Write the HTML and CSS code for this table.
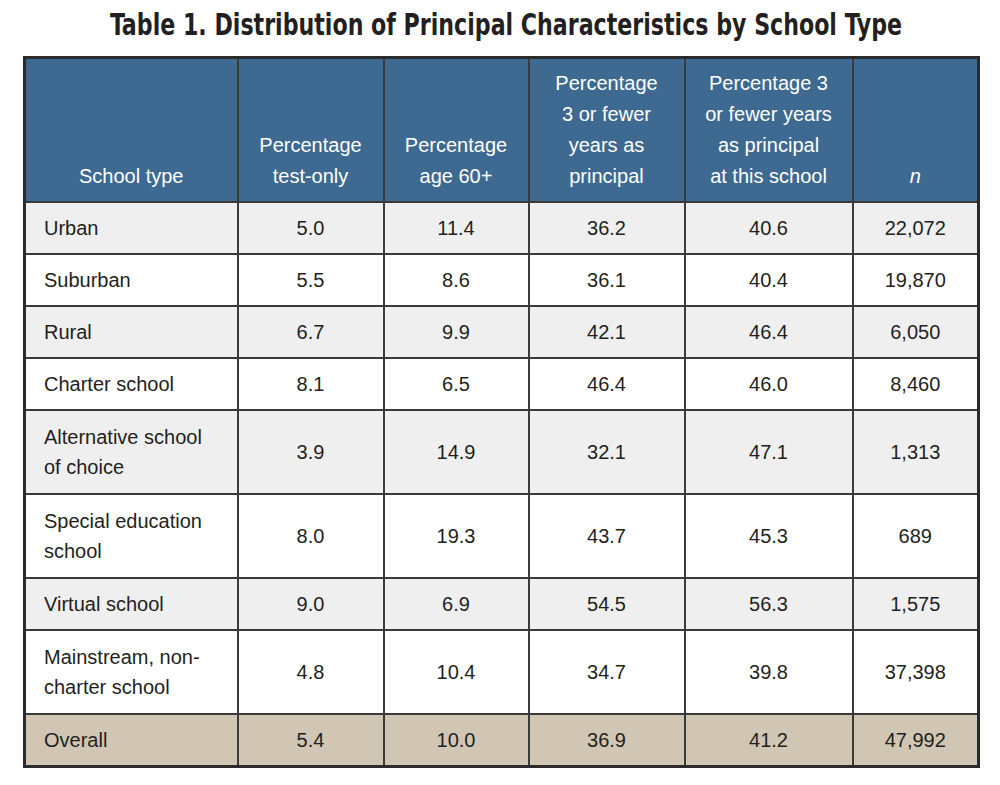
FILE: index.html
```html
<!DOCTYPE html>
<html lang="en">
  <head>
    <meta charset="UTF-8" />
    <meta name="viewport" content="width=device-width, initial-scale=1.0" />
    <title>Table 1. Distribution of Principal Characteristics by School Type</title>
    <link rel="stylesheet" href="styles.css">
  </head>

  <body>
    <div class="page">
      <h1 class="title"><span>Table 1. Distribution of Principal Characteristics by School Type</span></h1>

      <table class="dist">
        <colgroup>
          <col class="c-type" />
          <col class="c-test" />
          <col class="c-age" />
          <col class="c-years" />
          <col class="c-school" />
          <col class="c-n" />
        </colgroup>
        <thead>
          <tr>
            <th>School type</th>
            <th>Percentage<br />test-only</th>
            <th>Percentage<br />age 60+</th>
            <th>Percentage<br />3 or fewer<br />years as<br />principal</th>
            <th>Percentage 3<br />or fewer years<br />as principal<br />at this school</th>
            <th><i>n</i></th>
          </tr>
        </thead>
        <tbody>
          <tr class="shade">
            <td>Urban</td><td>5.0</td><td>11.4</td><td>36.2</td><td>40.6</td><td>22,072</td>
          </tr>
          <tr>
            <td>Suburban</td><td>5.5</td><td>8.6</td><td>36.1</td><td>40.4</td><td>19,870</td>
          </tr>
          <tr class="shade">
            <td>Rural</td><td>6.7</td><td>9.9</td><td>42.1</td><td>46.4</td><td>6,050</td>
          </tr>
          <tr>
            <td>Charter school</td><td>8.1</td><td>6.5</td><td>46.4</td><td>46.0</td><td>8,460</td>
          </tr>
          <tr class="shade two">
            <td>Alternative school<br />of choice</td><td>3.9</td><td>14.9</td><td>32.1</td><td>47.1</td><td>1,313</td>
          </tr>
          <tr class="two">
            <td>Special education<br />school</td><td>8.0</td><td>19.3</td><td>43.7</td><td>45.3</td><td>689</td>
          </tr>
          <tr class="shade">
            <td>Virtual school</td><td>9.0</td><td>6.9</td><td>54.5</td><td>56.3</td><td>1,575</td>
          </tr>
          <tr class="two">
            <td>Mainstream, non-<br />charter school</td><td>4.8</td><td>10.4</td><td>34.7</td><td>39.8</td><td>37,398</td>
          </tr>
          <tr class="total">
            <td>Overall</td><td>5.4</td><td>10.0</td><td>36.9</td><td>41.2</td><td>47,992</td>
          </tr>
        </tbody>
      </table>
    </div>
  </body>
</html>
```

FILE: styles.css
```css
* {
  box-sizing: border-box;
}

html,
body {
  margin: 0;
  background-color: #fff;
}

.page {
  width: 1000px;
  padding: 0 23px;
  font-family: "Liberation Sans", Arial, sans-serif;
  color: #231f20;
}

.title {
  margin: 0;
  height: 56px;
  line-height: 50px;
  text-align: center;
  white-space: nowrap;
  font-family: "DejaVu Sans Condensed", "DejaVu Sans", sans-serif;
  font-size: 30px;
  font-weight: bold;
  color: #231f20;
}

/* the print face is a condensed gothic; squeeze the nearest local one */
.title span {
  display: inline-block;
  transform: scaleX(0.82);
}

.dist {
  width: 954px;
  border-collapse: collapse;
  table-layout: fixed;
  border: 3px solid #2b2b2b;
  font-size: 20px;
}

.c-type { width: 213px; }
.c-test { width: 146px; }
.c-age { width: 145px; }
.c-years { width: 156px; }
.c-school { width: 168px; }
.c-n { width: 126px; }

.dist th,
.dist td {
  border: 2px solid #3a3a3a;
  padding: 10px 8px;
  line-height: 30px;
}

.dist th {
  background-color: #3e6990;
  color: #fff;
  font-weight: normal;
  line-height: 31px;
  padding: 9px 6px;
  text-align: center;
  vertical-align: bottom;
}

.dist td {
  text-align: center;
  vertical-align: middle;
  background-color: #fff;
}

.dist tr.two td {
  padding-top: 11px;
  padding-bottom: 11px;
}

.dist td:first-child {
  text-align: left;
  padding-left: 18px;
}

.dist tr.shade td {
  background-color: #efefef;
}

.dist tr.total td {
  background-color: #d1c6b3;
}
```
